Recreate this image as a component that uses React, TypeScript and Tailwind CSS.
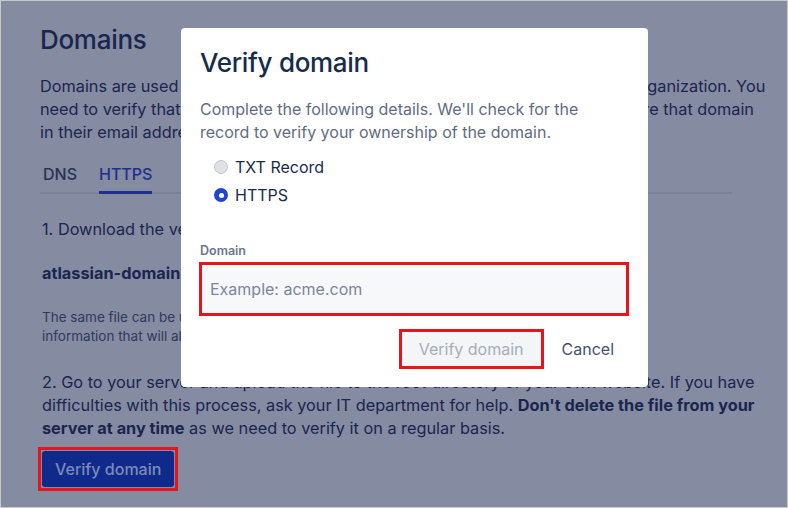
import React from 'react';

const font = { fontFamily: 'Inter, "Noto Sans", sans-serif' };

export default function App() {
  return (
    <div
      className="relative h-[508px] w-[788px] overflow-hidden border border-[#c9c9c9] bg-[#858ba0] text-[#1a2550]"
      style={font}
    >
      {/* Dimmed page behind the dialog */}
      <div className="pl-[39px] pt-[23px]">
        <h1 className="text-[26px] font-medium leading-[32px] tracking-[-0.3px]">Domains</h1>

        <p className="mt-[19px] whitespace-nowrap text-[16.3px] leading-[23px]">
          Domains are used to verify and claim the Atlassian accounts of users in your organization. You
          <br />
          need to verify that you own the domain before you can manage users who share that domain
          <br />
          in their email address.
        </p>

        <div className="mt-[20px] mr-[55px] flex gap-[22px] border-b-2 border-[#7a8196] pl-[3px] text-[16px] font-medium leading-[21px]">
          <span className="pb-[7px] text-[#2a3352]">DNS</span>
          <span className="-mb-[2px] border-b-[3px] border-[#1b2f8f] pb-[6px] text-[#1b2f8f]">HTTPS</span>
        </div>

        <p className="mt-[24px] pl-[2px] text-[16.3px] leading-[23px]">1. Download the verification file.</p>

        <p className="mt-[21px] pl-[2px] text-[16.3px] font-bold leading-[23px]">atlassian-domain-verification.html</p>

        <p className="mt-[23px] whitespace-nowrap pl-[2px] text-[13.5px] leading-[19px] text-[#2f3a5c]">
          The same file can be used for all of your domains. It contains
          <br />
          information that will allow us to verify your ownership.
        </p>

        <p className="mt-[25px] whitespace-nowrap pl-[2px] text-[16.3px] leading-[23px]">
          2. Go to your server and upload the file to the root directory of your own website. If you have
          <br />
          difficulties with this process, ask your IT department for help.{' '}
          <b>Don't delete the file from your</b>
          <br />
          <b>server at any time</b> as we need to verify it on a regular basis.
        </p>

        <div className="-ml-[2px] mt-[7px] inline-flex border-[3px] border-[#e8141c] p-px">
          <button className="h-[36px] rounded-[3px] bg-[#0f2a8b] px-[13px] text-[16px] font-medium text-[#7e8ab3]">
            Verify domain
          </button>
        </div>
      </div>

      {/* Dialog */}
      <div className="absolute left-[180px] top-[27px] h-[359px] w-[467px] rounded-[4px] bg-white px-[19px] text-[#172b4d]">
        <h2 className="mt-[19px] text-[26px] font-medium leading-[32px] tracking-[-0.3px]">Verify domain</h2>

        <p className="mt-[19px] text-[16px] leading-[23px] text-[#5e6c84]">
          Complete the following details. We'll check for the
          <br />
          record to verify your ownership of the domain.
        </p>

        <div className="mt-[12px] flex flex-col gap-[6px] pl-[14px] text-[16px] leading-[22px]">
          <label className="flex items-center gap-[7px]">
            <span className="h-[14px] w-[14px] rounded-full border border-[#c1c7d0] bg-[#dfe1e6]" />
            TXT Record
          </label>
          <label className="flex items-center gap-[7px]">
            <span className="flex h-[14px] w-[14px] items-center justify-center rounded-full bg-[#1f45d2]">
              <span className="h-[5px] w-[5px] rounded-full bg-white" />
            </span>
            HTTPS
          </label>
        </div>

        <div className="mt-[37px] text-[12.5px] font-semibold leading-[16px] text-[#6b778c]">Domain</div>

        <div className="-ml-px mt-[3px] w-[430px] border-[3px] border-[#e8141c]">
          <div className="flex h-[48px] items-center bg-[#f7f8fa] px-[8px] text-[16px] text-[#7a869a]">
            Example: acme.com
          </div>
        </div>

        <div className="mt-[13px] flex items-center justify-end gap-[18px] pr-[15px]">
          <div className="border-[3px] border-[#e8141c]">
            <button className="h-[34px] bg-[#f4f5f7] px-[17px] text-[16px] text-[#a5adba]">Verify domain</button>
          </div>
          <button className="text-[16px] text-[#42526e]">Cancel</button>
        </div>
      </div>
    </div>
  );
}
